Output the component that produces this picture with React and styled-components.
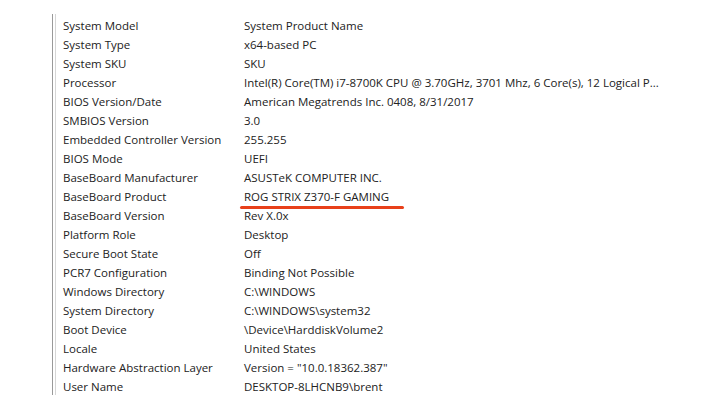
import React from 'react';
import styled, { createGlobalStyle } from 'styled-components';

const GlobalStyle = createGlobalStyle`
  body {
    margin: 0;
    background: #fff;
    font-family: "Open Sans", "Noto Sans", Arial, sans-serif;
  }
`;

const Page = styled.div`
  width: 705px;
  height: 414px;
  padding: 14px 0 0 52px;
  box-sizing: border-box;
  overflow: hidden;
`;

const Panel = styled.div`
  border-left: 1px solid #9a9a9a;
  height: 381px;
`;

const List = styled.div`
  margin-left: 2px;
  border-left: 1px solid #d6d6d6;
  height: 100%;
  padding: 2px 0 0 7px;
  box-sizing: border-box;
`;

const Row = styled.div`
  display: grid;
  grid-template-columns: 181px 1fr;
  height: 19px;
  align-items: center;
  font-size: 11.5px;
  color: #222;
  white-space: nowrap;
`;

const Value = styled.span`
  position: relative;
  justify-self: start;

  ${({ $marked }) => $marked && `
    &::after {
      content: '';
      position: absolute;
      left: -4px;
      right: -15px;
      bottom: -5px;
      height: 3px;
      border-radius: 2px;
      background: #e8401a;
    }
  `}
`;

const rows = [
  ['System Model', 'System Product Name'],
  ['System Type', 'x64-based PC'],
  ['System SKU', 'SKU'],
  ['Processor', 'Intel(R) Core(TM) i7-8700K CPU @ 3.70GHz, 3701 Mhz, 6 Core(s), 12 Logical P...'],
  ['BIOS Version/Date', 'American Megatrends Inc. 0408, 8/31/2017'],
  ['SMBIOS Version', '3.0'],
  ['Embedded Controller Version', '255.255'],
  ['BIOS Mode', 'UEFI'],
  ['BaseBoard Manufacturer', 'ASUSTeK COMPUTER INC.'],
  ['BaseBoard Product', 'ROG STRIX Z370-F GAMING', true],
  ['BaseBoard Version', 'Rev X.0x'],
  ['Platform Role', 'Desktop'],
  ['Secure Boot State', 'Off'],
  ['PCR7 Configuration', 'Binding Not Possible'],
  ['Windows Directory', 'C:\\WINDOWS'],
  ['System Directory', 'C:\\WINDOWS\\system32'],
  ['Boot Device', '\\Device\\HarddiskVolume2'],
  ['Locale', 'United States'],
  ['Hardware Abstraction Layer', 'Version = "10.0.18362.387"'],
  ['User Name', 'DESKTOP-8LHCNB9\\brent'],
];

export default function App() {
  return (
    <Page>
      <GlobalStyle />
      <Panel>
        <List>
          {rows.map(([label, value, marked]) => (
            <Row key={label}>
              <span>{label}</span>
              <Value $marked={marked}>{value}</Value>
            </Row>
          ))}
        </List>
      </Panel>
    </Page>
  );
}
